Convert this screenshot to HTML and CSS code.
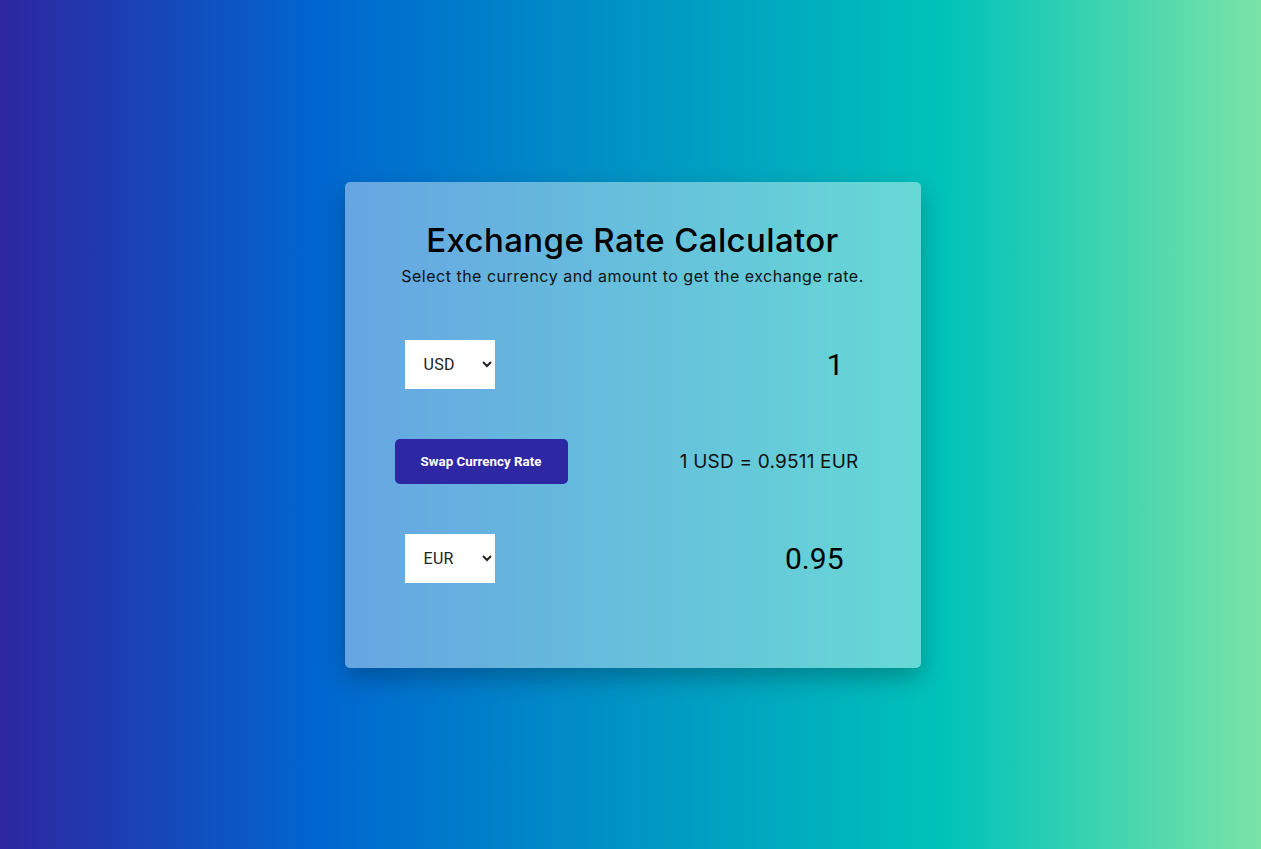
FILE: index.html
```html
<!DOCTYPE html>
<html lang="en">
<head>
<meta charset="UTF-8">
<title>Exchange Rate Calculator</title>
<link rel="stylesheet" href="styles.css">
</head>
<body>
  <div class="card">
    <header class="card-header">
      <h1 class="title">Exchange Rate Calculator</h1>
      <p class="subtitle">Select the currency and amount to get the exchange rate.</p>
    </header>
    <div class="currency-row">
      <select class="currency-select">
        <option>USD</option>
        <option>EUR</option>
      </select>
      <input class="amount" type="number" value="1">
    </div>
    <div class="swap-row">
      <button class="swap-btn">Swap Currency Rate</button>
      <div class="rate">1 USD = 0.9511 EUR</div>
    </div>
    <div class="currency-row">
      <select class="currency-select">
        <option>EUR</option>
        <option>USD</option>
      </select>
      <input class="amount" type="number" value="0.95">
    </div>
  </div>
</body>
</html>
```

FILE: styles.css
```css
* { box-sizing: border-box; }

body {
  margin: 0;
  padding-left: 4px;
  min-height: 100vh;
  display: flex;
  align-items: center;
  justify-content: center;
  background: linear-gradient(90deg, #2e26a0 0%, #0066d0 25%, #00c3b9 75%, #7be3a8 100%);
  font-family: "Inter", "Liberation Sans", sans-serif;
}

.card {
  width: 576px;
  height: 486px;
  background: rgba(255, 255, 255, 0.4);
  border-radius: 5px;
  box-shadow: 0 10px 25px rgba(0, 0, 0, 0.25);
  padding: 0 50px 61px;
  display: flex;
  flex-direction: column;
}

.card-header {
  height: 134px;
  display: flex;
  flex-direction: column;
  align-items: center;
  padding-top: 38px;
}

.title {
  margin: 0;
  font-size: 33px;
  line-height: 40px;
  font-weight: 500;
  color: #000;
  letter-spacing: 0.37px;
}

.subtitle {
  margin: 5px 0 0;
  font-size: 16px;
  line-height: 22px;
  color: #111;
  letter-spacing: 0.5px;
}

.currency-row {
  height: 97px;
  display: flex;
  align-items: center;
  justify-content: space-between;
  padding: 0 0 0 10px;
}

.currency-select {
  width: 90px;
  height: 49px;
  border: none;
  border-radius: 0;
  background: #fff;
  padding: 0 8px 0 15px;
  font-family: "Roboto", "Liberation Sans", sans-serif;
  font-size: 16px;
  letter-spacing: 0.3px;
  color: #222;
}

.amount {
  width: 150px;
  border: none;
  background: transparent;
  text-align: right;
  padding: 0 27px 0 0;
  font-family: "Roboto", "Liberation Sans", sans-serif;
  font-size: 30px;
  color: #000;
  -moz-appearance: textfield;
}

.amount::-webkit-outer-spin-button,
.amount::-webkit-inner-spin-button {
  -webkit-appearance: none;
  margin: 0;
}

.swap-row {
  height: 97px;
  display: flex;
  align-items: center;
  justify-content: space-between;
  padding-right: 12px;
}

.swap-btn {
  width: 173px;
  height: 45px;
  border: none;
  border-radius: 5px;
  background: #2d27a3;
  color: #fff;
  font-family: "Roboto", "Liberation Sans", sans-serif;
  font-weight: 700;
  font-size: 13.333px;
  cursor: pointer;
}

.rate {
  font-size: 19px;
  color: #111;
  letter-spacing: 0.2px;
}
```
